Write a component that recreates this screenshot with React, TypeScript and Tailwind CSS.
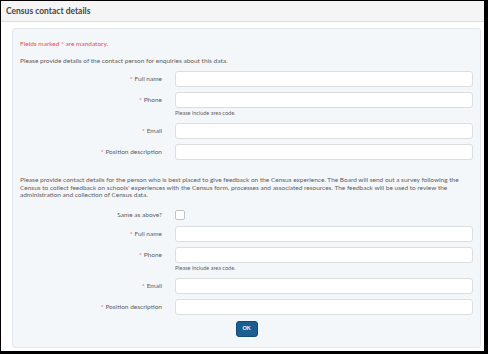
import { useState } from 'react';

type Field = { label: string; hint?: string };

const fields: Field[] = [
  { label: 'Full name' },
  { label: 'Phone', hint: 'Please include area code.' },
  { label: 'Email' },
  { label: 'Position description' },
];

const FieldRow = ({ field }: { field: Field }) => (
  <div className="flex items-start">
    <label className="w-[142px] shrink-0 h-[16px] flex items-center justify-end text-[6.5px] text-[#606060]">
      <span className="text-[#ea4b55] mr-[2px]">*</span>
      {field.label}
    </label>
    <div className="ml-[13px] flex-1">
      <input className="block w-full h-[16px] bg-white border border-[#dcdfe2] rounded-[3px] outline-none" />
      {field.hint && <p className="mt-[1px] mb-[1px] text-[5.5px] leading-[8px] text-[#666]">{field.hint}</p>}
    </div>
  </div>
);

const App = () => {
  const [same, setSame] = useState(false);

  return (
    <div className="w-[488px] h-[354px] bg-black pl-px pt-px pr-[4px] pb-[3px]" style={{ fontFamily: 'Lato, "Liberation Sans", sans-serif' }}>
      <div className="w-full h-full bg-white flex flex-col">
        {/* Header */}
        <div className="h-[21px] bg-[#f5f5f5] border-b border-[#dddddd] flex items-center px-[5px]">
          <h1 className="text-[8.5px] font-bold text-[#444]">Census contact details</h1>
        </div>

        {/* Form panel */}
        <div className="mt-[6px] ml-[11px] mr-[3px] flex-1 mb-[3px] bg-[#f4f7fa] border border-[#e4e8ec] rounded-[3px] px-[7px] pt-[10px]">
          <p className="text-[6.5px] leading-[9px] text-[#ea4b55]">Fields marked * are mandatory.</p>
          <p className="mt-[8px] text-[6.5px] leading-[9px] text-[#606060]">Please provide details of the contact person for enquiries about this data.</p>

          <div className="mt-[6px] flex flex-col gap-[5px]">
            {fields.map((f) => (
              <FieldRow key={f.label} field={f} />
            ))}
          </div>

          <p className="mt-[16px] text-[6.5px] leading-[7.5px] text-[#606060] pr-[10px]">
            Please provide contact details for the person who is best placed to give feedback on the Census experience. The Board will send out a survey following the Census to collect feedback on schools' experiences with the Census form, processes and associated resources. The feedback will be used to review the administration and collection of Census data.
          </p>

          <div className="mt-[11px] flex items-center">
            <label className="w-[142px] shrink-0 text-right text-[6.5px] text-[#606060]">Same as above?</label>
            <button
              onClick={() => setSame(!same)}
              className="ml-[13px] w-[10px] h-[10px] bg-white border border-[#bfc4c9] rounded-[2px]"
            />
          </div>

          <div className="mt-[6px] flex flex-col gap-[5px]">
            {fields.map((f) => (
              <FieldRow key={f.label} field={f} />
            ))}
          </div>

          <div className="mt-[6px] flex justify-center">
            <button className="w-[22px] h-[16px] bg-[#1c5d92] border border-[#144a77] rounded-[3px] text-white text-[5.5px] font-bold">OK</button>
          </div>
        </div>
      </div>
    </div>
  );
};

export default App;
